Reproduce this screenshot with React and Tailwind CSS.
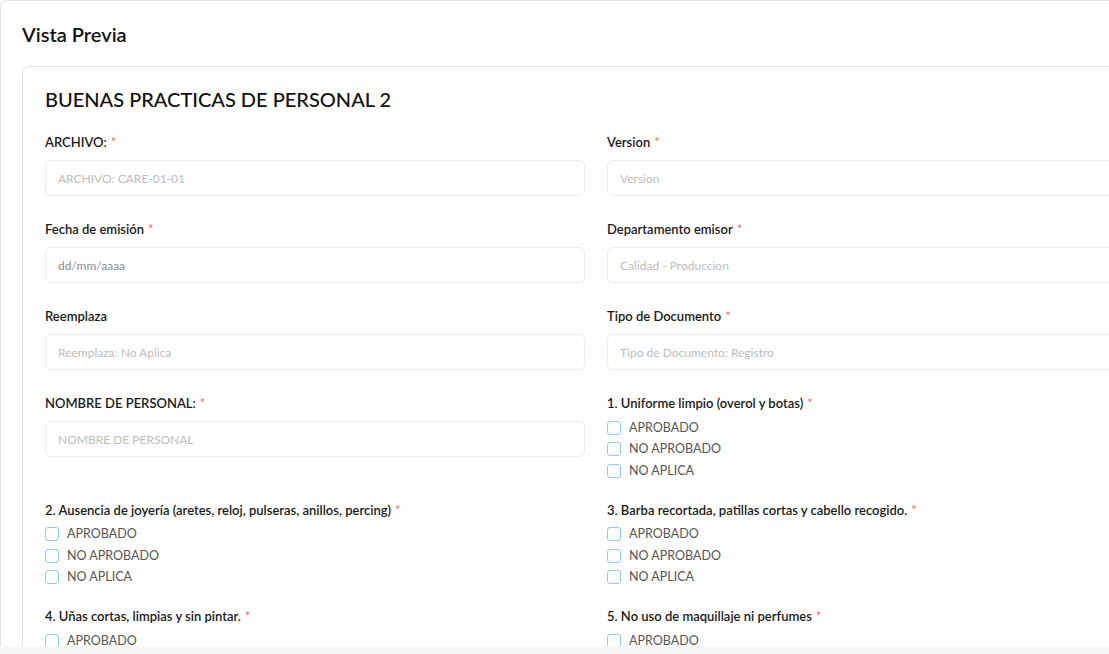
import React from 'react';

const font = { fontFamily: 'Lato, "Noto Sans", sans-serif' };

const rows = [
    [
        { type: 'input', label: 'ARCHIVO:', required: true, placeholder: 'ARCHIVO: CARE-01-01' },
        { type: 'input', label: 'Version', required: true, placeholder: 'Version' },
    ],
    [
        { type: 'input', label: 'Fecha de emisión', required: true, placeholder: 'dd/mm/aaaa', dark: true },
        { type: 'input', label: 'Departamento emisor', required: true, placeholder: 'Calidad - Produccion' },
    ],
    [
        { type: 'input', label: 'Reemplaza', placeholder: 'Reemplaza: No Aplica' },
        { type: 'input', label: 'Tipo de Documento', required: true, placeholder: 'Tipo de Documento: Registro' },
    ],
    [
        { type: 'input', label: 'NOMBRE DE PERSONAL:', required: true, placeholder: 'NOMBRE DE PERSONAL' },
        { type: 'check', label: '1. Uniforme limpio (overol y botas)', required: true },
    ],
    [
        { type: 'check', label: '2. Ausencia de joyería (aretes, reloj, pulseras, anillos, percing)', required: true },
        { type: 'check', label: '3. Barba recortada, patillas cortas y cabello recogido.', required: true },
    ],
    [
        { type: 'check', label: '4. Uñas cortas, limpias y sin pintar.', required: true },
        { type: 'check', label: '5. No uso de maquillaje ni perfumes', required: true },
    ],
];

const options = ['APROBADO', 'NO APROBADO', 'NO APLICA'];

function Label({ text, required }) {
    return (
        <label className="block h-5 text-[13px] leading-5 font-semibold text-[#1a1a1a] whitespace-nowrap">
            {text}
            {required && <span className="ml-1 font-normal text-[#f26b6b]">*</span>}
        </label>
    );
}

function Field({ field }) {
    if (field.type === 'input') {
        return (
            <div>
                <Label text={field.label} required={field.required} />
                <input
                    type="text"
                    placeholder={field.placeholder}
                    className={`mt-2 block w-full h-9 rounded-md border border-[#ececec] bg-white px-3 text-[12px] outline-none ${field.dark ? 'placeholder:text-[#8c8c8c]' : 'placeholder:text-[#bdbdbd]'}`}
                />
            </div>
        );
    }
    // checkbox group: label plus the three fixed answers
    return (
        <div className="-mb-[5px]">
            <Label text={field.label} required={field.required} />
            <div className="mt-[4px]">
                {options.map((opt) => (
                    <label key={opt} className="flex items-center h-[21.5px] gap-2">
                        <span className="w-[14px] h-[14px] rounded-[3px] border border-[#8fc6fb] bg-white shrink-0" />
                        <span className="text-[12.5px] text-[#555] leading-none">{opt}</span>
                    </label>
                ))}
            </div>
        </div>
    );
}

export default function App() {
    return (
        <div className="h-[654px] w-[1109px] overflow-hidden bg-[#f7f7f7]" style={font}>
            <div className="h-[646px] overflow-hidden">
                <div className="w-[1192px] h-[700px] bg-white border border-[#e3e3e3] rounded-lg pl-[21px] pt-[19px]">
                    <h1 className="text-[20px] leading-7 font-semibold text-[#111]">Vista Previa</h1>
                    <div className="mt-[18px] w-[1148px] h-[620px] border border-[#e3e3e3] rounded-lg px-[22px] pt-[17px]">
                        <h2 className="text-[20px] leading-[30px] font-medium text-[#111]">BUENAS PRACTICAS DE PERSONAL 2</h2>
                        <div className="mt-[18px] grid grid-cols-2 gap-x-[22px] gap-y-[23px]">
                            {rows.map((row, i) =>
                                row.map((f, j) => <Field key={`${i}-${j}`} field={f} />)
                            )}
                        </div>
                    </div>
                </div>
            </div>
        </div>
    );
}
